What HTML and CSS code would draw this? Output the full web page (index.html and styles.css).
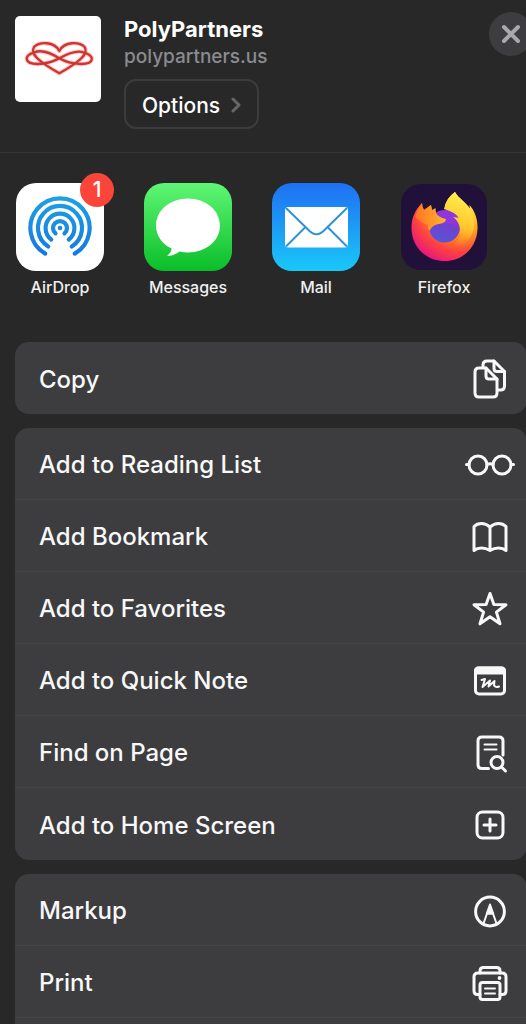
FILE: index.html
```html
<!DOCTYPE html>
<html lang="en">
<head>
<meta charset="utf-8">
<meta name="viewport" content="width=device-width, initial-scale=1">
<title>Share PolyPartners</title>
<link rel="stylesheet" href="styles.css">
</head>
<body>
<main class="sheet">
  <header class="header">
    <svg class="thumb" viewBox="17 17 258 258" aria-hidden="true">
      <g class="heart-glow"><path d="M150 122C135 92 90 94 74 110C62 130 85 152 150 189C215 152 238 130 226 110C210 94 165 92 150 122Z"/><path d="M150 144C120 125 95 118 75 126C43 136 43 160 85 161C115 160 130 154 150 144C175 130 200 119 222 126C257 136 257 160 215 161C185 160 170 156 150 144Z"/></g>
      <g class="heart-line"><path d="M150 122C135 92 90 94 74 110C62 130 85 152 150 189C215 152 238 130 226 110C210 94 165 92 150 122Z"/><path d="M150 144C120 125 95 118 75 126C43 136 43 160 85 161C115 160 130 154 150 144C175 130 200 119 222 126C257 136 257 160 215 161C185 160 170 156 150 144Z"/></g>
    </svg>
    <div class="info">
      <h1 class="title">PolyPartners</h1>
      <p class="domain">polypartners.us</p>
      <button class="options" type="button">Options
        <svg class="chevron" viewBox="0 0 10 16" aria-hidden="true"><path d="M2 2l6 6-6 6"/></svg>
      </button>
    </div>
    <button class="close" type="button" aria-label="Close">
      <svg class="cross" viewBox="0 0 20 20" aria-hidden="true"><path d="M3 3l14 14M17 3L3 17"/></svg>
    </button>
  </header>

  <nav class="apps" aria-label="Apps">
    <a class="app" href="#airdrop">
      <svg class="app-icon" viewBox="0 0 88 88" aria-hidden="true">
        <defs><linearGradient id="air" gradientUnits="userSpaceOnUse" x1="0" y1="14" x2="0" y2="74"><stop offset="0" stop-color="#1fa0e4"/><stop offset="1" stop-color="#1579e0"/></linearGradient></defs>
        <rect width="88" height="88" rx="20" fill="#fff"/>
        <circle cx="44" cy="45" r="2.3" fill="#1b8ce2"/>
        <g fill="none" stroke="url(#air)" stroke-width="4.2" stroke-linecap="round">
          <path d="M39.5 50.4A7 7 0 1 1 48.500 50.4"/>
          <path d="M35.2 56.500A14.4 14.4 0 1 1 52.8 56.500"/>
          <path d="M32.2 63.500A22 22 0 1 1 55.8 63.500"/>
          <path d="M29.2 70.600A29.6 29.6 0 1 1 58.8 70.600"/>
        </g>
      </svg>
      <span class="badge">1</span>
      <span class="app-name">AirDrop</span>
    </a>
    <a class="app" href="#messages">
      <svg class="app-icon" viewBox="0 0 88 88" aria-hidden="true">
        <defs><linearGradient id="msg" x1="0" y1="0" x2="0" y2="1"><stop offset="0" stop-color="#5ff675"/><stop offset="1" stop-color="#0abe29"/></linearGradient></defs>
        <rect width="88" height="88" rx="20" fill="url(#msg)"/>
        <path fill="#fff" d="M44 15.500C61.500 15.500 76 27 76 42.500S61.500 69.500 44 69.500Q39.500 69.500 35.500 68.600Q30 73 23 73Q27.500 69 27.600 65.500C18 61 12 52.500 12 42.500C12 27 26.500 15.500 44 15.500Z"/>
      </svg>
      <span class="app-name">Messages</span>
    </a>
    <a class="app" href="#mail">
      <svg class="app-icon" viewBox="0 0 88 88" aria-hidden="true">
        <defs><linearGradient id="mail" x1="0" y1="0" x2="0" y2="1"><stop offset="0" stop-color="#1f70f2"/><stop offset="1" stop-color="#19c8f8"/></linearGradient></defs>
        <rect width="88" height="88" rx="20" fill="url(#mail)"/>
        <rect x="13" y="24" width="63" height="40.500" rx="3" fill="#fff"/>
        <g fill="none" stroke="#2b93d6" stroke-width="2"><path d="M14 25L36 46.500Q44.500 56 53 46.500L75 25"/><path d="M14 63.500L33 44.500M75 63.500L56 44.500"/></g>
      </svg>
      <span class="app-name">Mail</span>
    </a>
    <a class="app" href="#firefox">
      <svg class="app-icon" viewBox="0 0 88 88" aria-hidden="true">
        <defs>
          <radialGradient id="fox" gradientUnits="userSpaceOnUse" cx="64" cy="17" r="67"><stop offset="0" stop-color="#fff14a"/><stop offset=".3" stop-color="#ffcb32"/><stop offset=".55" stop-color="#ff8a25"/><stop offset=".78" stop-color="#fd4240"/><stop offset="1" stop-color="#e9187c"/></radialGradient>
          <linearGradient id="globe" x1=".7" y1="0" x2=".4" y2="1"><stop offset="0" stop-color="#9b2fdf"/><stop offset=".5" stop-color="#6f42cf"/><stop offset="1" stop-color="#5656d6"/></linearGradient>
          <linearGradient id="flame" x1=".6" y1="0" x2=".4" y2="1"><stop offset="0" stop-color="#fff24d"/><stop offset=".6" stop-color="#ffc62e"/><stop offset="1" stop-color="#ff8c22" stop-opacity="0"/></linearGradient>
          <linearGradient id="snout" x1="0" y1="0" x2="1" y2="0"><stop offset="0" stop-color="#ff7324"/><stop offset="1" stop-color="#ffb52e"/></linearGradient>
        </defs>
        <rect x="1" y="1" width="86" height="86" rx="20" fill="#20103a"/>
        <path fill="url(#fox)" d="M55 9C59 16 66 19 70 26Q69.500 24 69.500 22C75 28 78 37 77.500 46C77 64 63 78 45 78C26 78 11.500 64 11.500 45C11.500 35 15 27 22 20Q22 24 24 27L31 22L32 28Q36 29 39 33L56 34Q44 25 45 23Q47 15 55 9Z"/>
        <circle cx="44.500" cy="44" r="15.500" fill="url(#globe)"/>
        <path fill="#8e35dc" d="M35 30C42 25 54 26 59 35L54 34L58 42L38 40Z"/>
        <path fill="url(#flame)" d="M55 9C59 16 66 19 70 26Q78 42 70 55Q63 66 49 64Q62 58 60 46Q59 38 53 34L59 35Q55 29 44 26Q46 15 55 9Z"/>
        <path fill="url(#snout)" d="M15 34Q18 26 22 20Q22 24 24 27L31 22L32 27L35.500 25L36 30Q38 34 46 36Q46 40 39 41Q32 42 29.500 48Q27 45 28 42Q22 40 19 37Z"/>
      </svg>
      <span class="app-name">Firefox</span>
    </a>
  </nav>

  <section class="group">
    <button class="row" type="button">Copy
      <svg class="icon" viewBox="0 0 52 52" aria-hidden="true"><path d="M19 14v-2q0-4 4-4h7l10.500 10.500V33q0 4-4 4H34"/><path d="M30 8v7.500q0 3 3 3h7.500"/><path d="M15 15h7l11 11v14q0 4-4 4H15q-4 0-4-4V19q0-4 4-4z"/><path d="M22 15v8q0 3 3 3h8"/></svg>
    </button>
  </section>

  <section class="group">
    <button class="row" type="button">Add to Reading List
      <svg class="icon" viewBox="0 0 52 52" aria-hidden="true"><circle cx="14" cy="26" r="9"/><circle cx="38" cy="26" r="9"/><path d="M23 25.500Q26 24 29 25.500M2.500 25.500H5M47 25.500h2.500"/></svg>
    </button>
    <button class="row" type="button">Add Bookmark
      <svg class="icon" viewBox="0 0 52 52" aria-hidden="true"><path d="M26 16Q22 12.500 17.500 12.500Q13 12.500 10 15.500V39.500Q13 37 17.500 37Q22 37 26 39.500Q30 37 34.500 37Q39 37 42 39.500V15.500Q39 12.500 34.500 12.500Q30 12.500 26 16V39"/></svg>
    </button>
    <button class="row" type="button">Add to Favorites
      <svg class="icon" viewBox="0 0 52 52" aria-hidden="true"><path d="M26 10.500L29.900 21.600L42 21.700L32.400 29.100L36 40.800L26 33.700L16 40.800L19.600 29.100L10 21.700L22.100 21.600Z"/></svg>
    </button>
    <button class="row" type="button">Add to Quick Note
      <svg class="icon" viewBox="0 0 52 52" aria-hidden="true"><rect x="11.500" y="13" width="29" height="26" rx="3.500"/><path class="solid" d="M11.500 18v-2q0-3 3-3h23q3 0 3 3v2z"/><path class="scribble" d="M17.500 25L21 24L18.500 32L26 25.500L24.500 31.500L30.500 26L30 30.500Q32 33 35 31.500"/></svg>
    </button>
    <button class="row" type="button">Find on Page
      <svg class="icon" viewBox="0 0 52 52" aria-hidden="true"><path d="M24.500 41.500H18q-4 0-4-4V14q0-4 4-4h17q4 0 4 4v14"/><path class="thin" d="M20.500 17.500h12M20.500 22.500h12"/><circle cx="33" cy="35.500" r="6"/><path d="M37.500 40l4 4"/></svg>
    </button>
    <button class="row" type="button">Add to Home Screen
      <svg class="icon" viewBox="0 0 52 52" aria-hidden="true"><rect x="13" y="13" width="26" height="26" rx="5.500"/><path d="M26 20v12M20 26h12"/></svg>
    </button>
  </section>

  <section class="group group-last">
    <button class="row" type="button">Markup
      <svg class="icon" viewBox="0 0 52 52" aria-hidden="true"><circle cx="26" cy="26.500" r="14.400"/><path class="thin" d="M19.500 38.500L23 28.500h6L32.500 38.500"/><path class="solid thin" d="M26 19.500l3.200 9h-6.400z"/></svg>
    </button>
    <button class="row" type="button">Print
      <svg class="icon" viewBox="0 0 52 52" aria-hidden="true"><path d="M16 37.500h-2.500q-3.500 0-3.500-3.500V20q0-4 4-4h24q4 0 4 4v14q0 3.500-3.500 3.500H36"/><path d="M16 16v-2q0-3.500 3.500-3.500h13q3.500 0 3.500 3.500v2"/><rect x="16" y="25.500" width="20" height="17" rx="2.500"/><path class="thin" d="M21 31.500h10M21 36.500h10"/><circle class="dot" cx="35.500" cy="21" r="1.900"/></svg>
    </button>
  </section>
</main>
</body>
</html>
```
FILE: styles.css
```css
* {
  box-sizing: border-box;
}

body {
  margin: 0;
  background: #282828;
  color: #fff;
  font-family: Inter, "Liberation Sans", sans-serif;
}

button {
  font: inherit;
  color: inherit;
  border: 0;
}

svg {
  display: block;
  flex: none;
}

.sheet {
  display: flex;
  flex-direction: column;
  min-height: 100vh;
  overflow: hidden;
}

.header {
  display: flex;
  align-items: flex-start;
  padding: 16px 0 23px 15px;
  border-bottom: 1px solid #363636;
}

.thumb {
  width: 86px;
  height: 86px;
  margin-right: 23px;
  border-radius: 5px;
  background: #fff;
}

.heart-glow,
.heart-line {
  fill: none;
  stroke-linejoin: round;
}

.heart-glow {
  stroke: #fbc9c4;
  stroke-width: 13px;
}

.heart-line {
  stroke: #cf3434;
  stroke-width: 7px;
}

.info {
  flex: 1;
}

.title {
  margin: 0;
  font-size: 22px;
  line-height: 27px;
  font-weight: 700;
}

.domain {
  margin: 0 0 8px;
  color: #8b8b90;
  font-size: 19px;
  line-height: 28px;
  font-weight: 500;
}

.options {
  display: flex;
  align-items: center;
  gap: 11px;
  height: 50px;
  padding: 2px 16px 0;
  border: 2px solid #3c3c3e;
  border-radius: 12px;
  background: transparent;
  font-size: 21px;
  font-weight: 500;
}

.chevron {
  width: 10px;
  height: 16px;
  fill: none;
  stroke: #67676a;
  stroke-width: 3px;
  stroke-linecap: round;
  stroke-linejoin: round;
}

.close {
  display: grid;
  place-items: center;
  width: 44px;
  height: 44px;
  margin: -4px -7px 0 0;
  padding: 0;
  border-radius: 50%;
  background: #3d3d40;
}

.cross {
  width: 20px;
  height: 20px;
  fill: none;
  stroke: #a8a8ad;
  stroke-width: 4px;
  stroke-linecap: round;
}

.apps {
  display: grid;
  grid-template-columns: repeat(4, 88px);
  gap: 40px;
  padding: 30px 0 45px 16px;
}

.app {
  position: relative;
  display: flex;
  flex-direction: column;
  align-items: center;
  gap: 6px;
  color: #f0f0f0;
  text-decoration: none;
}

.app-icon {
  width: 88px;
  height: 88px;
}

.app-name {
  font-size: 16px;
  line-height: 20px;
  font-weight: 500;
}

.badge {
  position: absolute;
  top: -10px;
  right: -10px;
  width: 34px;
  height: 34px;
  border-radius: 50%;
  background: #fc453a;
  color: #fff;
  font-size: 21px;
  line-height: 34px;
  font-weight: 500;
  text-align: center;
}

.group {
  margin: 0 -1px 14px 15px;
  border-radius: 14px;
  background: #3d3d3f;
  overflow: hidden;
}

.group-last {
  flex: 1;
  margin-bottom: 0;
  border-radius: 14px 14px 0 0;
}

.row {
  display: flex;
  align-items: center;
  justify-content: space-between;
  width: 100%;
  height: 72px;
  padding: 2px 11px 0 24px;
  border-bottom: 1px solid #444446;
  background: transparent;
  color: #f8f8f8;
  font-size: 24px;
  font-weight: 500;
  text-align: left;
}

.group:not(.group-last) .row:last-child {
  border-bottom: 0;
}

.icon {
  width: 52px;
  height: 52px;
  fill: none;
  stroke: #f8f8f8;
  stroke-width: 3px;
  stroke-linecap: round;
  stroke-linejoin: round;
}

.solid,
.dot {
  fill: #f8f8f8;
}

.thin,
.scribble {
  stroke-width: 2px;
}

.dot {
  stroke: none;
}
```
